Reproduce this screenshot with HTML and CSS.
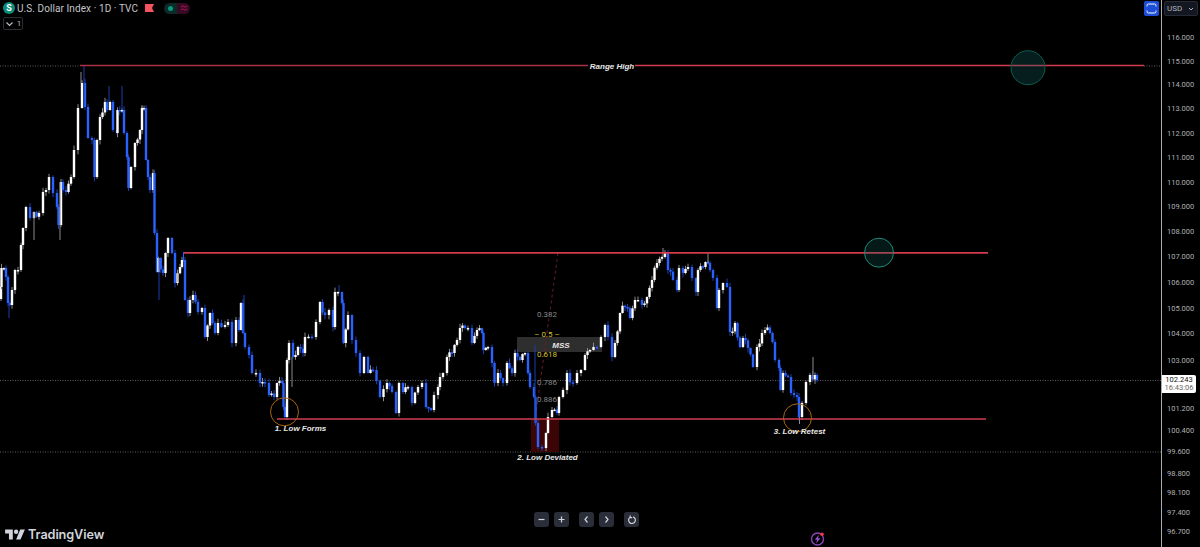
FILE: index.html
```html
<!DOCTYPE html>
<html>
  <head>
    <title>U.S. Dollar Index chart</title>

    <link rel="stylesheet" href="styles.css">
  </head>
  <body>
    <div class="chart-page">
      <div class="chart">
        <svg class="chart-canvas" width="1161" height="547">
          <!-- under the candles -->
          <line class="dots" x1="0" y1="66" x2="80" y2="66"></line>
          <line class="dots" x1="1144" y1="66" x2="1161" y2="66"></line>
          <line class="dots" x1="0" y1="380.5" x2="1161" y2="380.5"></line>
          <line class="dots" x1="0" y1="452" x2="1161" y2="452"></line>
          <rect class="deviation-box" x="531" y="419" width="28" height="33"></rect>
          <rect class="mss-box" x="517" y="337" width="85" height="15"></rect>
          <line class="fib-line" x1="558" y1="253" x2="535" y2="420"></line>

          <g class="js-candles"></g>

          <!-- drawings on top -->
          <line class="level-dim" x1="80" y1="65.5" x2="588" y2="65.5"></line>
          <line class="level" x1="635" y1="65.5" x2="1144" y2="65.5"></line>
          <line class="level" x1="183" y1="252.8" x2="988" y2="252.8"></line>
          <line class="level-start" x1="183.5" y1="252" x2="183.5" y2="262"></line>
          <line class="level" x1="277" y1="419" x2="986" y2="419"></line>

          <circle class="target-big" cx="1028" cy="67.7" r="17"></circle>
          <circle class="target-small" cx="879" cy="252.7" r="14.5"></circle>
          <circle class="low-ring" cx="284.5" cy="411.8" r="14"></circle>
          <circle class="low-ring" cx="797.5" cy="417.8" r="14"></circle>

          <text class="note" x="612" y="68.5" text-anchor="middle">Range High</text>
          <text class="note" x="300.5" y="430.5" text-anchor="middle">1. Low Forms</text>
          <text class="note" x="547.5" y="459.5" text-anchor="middle">2. Low Deviated</text>
          <text class="note" x="799.5" y="433.5" text-anchor="middle">3. Low Retest</text>
          <text class="note" x="561" y="347.5" text-anchor="middle">MSS</text>

          <text class="fib-label" x="547" y="317">0.382</text>
          <text class="fib-label fib-gold" x="547" y="337">– 0.5 –</text>
          <text class="fib-label fib-gold" x="547" y="357">0.618</text>
          <text class="fib-label" x="547" y="385">0.786</text>
          <text class="fib-label" x="547" y="402">0.886</text>
        </svg>

        <div class="legend">
          <span class="symbol-icon">S</span>
          <span class="legend-title">U.S. Dollar Index · 1D · TVC</span>
          <svg class="legend-flag" width="9" height="8" viewBox="0 0 9 8">
            <path d="M0 0H9L7 4L9 8H0Z"></path>
          </svg>
          <div class="status-pill">
            <span class="status-open"><span class="status-dot"></span></span>
            <span class="status-data">
              <svg width="8" height="6" viewBox="0 0 8 6">
                <path d="M1 2C2.5 .8 3.5 .8 4 1.5S5.5 2.2 7 1M1 5C2.5 3.8 3.5 3.8 4 4.5S5.5 5.2 7 4"></path>
              </svg>
            </span>
          </div>
        </div>

        <button class="collapse-button">
          <svg width="9" height="6" viewBox="0 0 9 6">
            <path d="M1.5 1.5L4.5 4.5L7.5 1.5"></path>
          </svg>
          <span>1</span>
        </button>

        <button class="fullscreen-button">
          <svg width="11" height="11" viewBox="0 0 11 11">
            <path d="M1 3.5V2.5Q1 1 2.5 1H8.5Q10 1 10 2.5V3.5M1 7.5V8.5Q1 10 2.5 10H8.5Q10 10 10 8.5V7.5"></path>
          </svg>
        </button>

        <div class="logo">
          <svg width="20" height="11" viewBox="0 0 36 20">
            <path d="M14 19H7V8H0V1H14V19ZM28 19H20L27.5 1H36L28 19Z"></path>
            <circle cx="20" cy="5" r="4"></circle>
          </svg>
          <span>TradingView</span>
        </div>

        <div class="nav-buttons">
          <div class="nav-group">
            <button class="nav-button">
              <svg width="9" height="9" viewBox="0 0 9 9"><path d="M1.5 4.5H7.5"></path></svg>
            </button>
            <button class="nav-button">
              <svg width="9" height="9" viewBox="0 0 9 9"><path d="M1.5 4.5H7.5M4.5 1.5V7.5"></path></svg>
            </button>
          </div>
          <div class="nav-group">
            <button class="nav-button">
              <svg width="9" height="9" viewBox="0 0 9 9"><path d="M5.5 1.5L3 4.5L5.5 7.5"></path></svg>
            </button>
            <button class="nav-button">
              <svg width="9" height="9" viewBox="0 0 9 9"><path d="M3.5 1.5L6 4.5L3.5 7.5"></path></svg>
            </button>
          </div>
          <button class="nav-button">
            <svg width="10" height="10" viewBox="0 0 10 10"><path d="M3.2 2.2A3.4 3.4 0 1 0 6.2 1.9M3.2 .6V2.6H5.2"></path></svg>
          </button>
        </div>

        <svg class="bolt-badge" width="16" height="16" viewBox="0 0 16 16">
          <circle class="bolt-ring" cx="7.5" cy="8" r="6"></circle>
          <path class="bolt" d="M9 3.8L4.8 8.8H7.2L6 12.4L10.4 7.2H8Z"></path>
          <circle class="bolt-dot" cx="12" cy="3.2" r="1.8"></circle>
        </svg>
      </div>

      <div class="price-axis">
        <svg width="38" height="547">
          <text x="5" y="40">116.000</text>
          <text x="5" y="64">115.000</text>
          <text x="5" y="87">114.000</text>
          <text x="5" y="111">113.000</text>
          <text x="5" y="136">112.000</text>
          <text x="5" y="160">111.000</text>
          <text x="5" y="185">110.000</text>
          <text x="5" y="209">109.000</text>
          <text x="5" y="234">108.000</text>
          <text x="5" y="259">107.000</text>
          <text x="5" y="285">106.000</text>
          <text x="5" y="311">105.000</text>
          <text x="5" y="336">104.000</text>
          <text x="5" y="363">103.000</text>
          <text x="5" y="411">101.200</text>
          <text x="5" y="433">100.400</text>
          <text x="5" y="454">99.600</text>
          <text x="5" y="476">98.800</text>
          <text x="5" y="495">98.100</text>
          <text x="5" y="515">97.400</text>
          <text x="5" y="534">96.700</text>
        </svg>
        <div class="last-price">
          <span class="last-value">102.243</span>
          <span class="last-timer">16:43:06</span>
        </div>
        <div class="currency-button">
          <span>USD</span>
          <svg width="6" height="4" viewBox="0 0 6 4"><path d="M1 1L3 3L5 1"></path></svg>
        </div>
      </div>
    </div>

    <script src="script.js"></script>
  </body>
</html>
```

FILE: styles.css
```css
body {
  margin: 0;
  background-color: black;
  font-family: Roboto, sans-serif;
  overflow: hidden;
}

button {
  padding: 0;
  border: none;
  font-family: inherit;
}

.chart-page {
  display: flex;
  width: 1200px;
  height: 547px;
}

.chart {
  position: relative;
  flex: 1;
}

.chart-canvas {
  display: block;
}

.dots {
  stroke: #5c5e63;
  stroke-width: 1;
  stroke-dasharray: 1 1.5;
}

.deviation-box {
  fill: #3c0505;
}

.mss-box {
  fill: #2e2e2e;
}

.fib-line {
  stroke: #6e1b26;
  stroke-width: 1;
  stroke-dasharray: 3 3;
}

.level,
.level-dim {
  stroke: #d23c4e;
  stroke-width: 1.7;
}

.level-dim {
  stroke: #a93342;
}

.level-start {
  stroke: #2962ff;
  stroke-width: 1;
}

.target-big {
  fill: rgba(20, 100, 100, 0.3);
  stroke: #0e5c50;
  stroke-width: 1;
}

.target-small {
  fill: rgba(20, 100, 100, 0.25);
  stroke: #1d8a78;
  stroke-width: 1;
}

.low-ring {
  fill: none;
  stroke: #a8660f;
  stroke-width: 1;
}

.note {
  fill: #e6e6e6;
  font-family: "Liberation Sans", sans-serif;
  font-size: 8px;
  font-style: italic;
  font-weight: bold;
}

.fib-label {
  fill: #85878b;
  font-size: 8px;
  text-anchor: middle;
}

.fib-gold {
  fill: #d8c22a;
}

.legend {
  position: absolute;
  top: 2px;
  left: 3px;
  display: flex;
  align-items: center;
  height: 12px;
}

.symbol-icon {
  display: flex;
  justify-content: center;
  align-items: center;
  width: 12px;
  height: 12px;
  border-radius: 6px;
  background-color: #0b8c78;
  color: white;
  font-size: 9px;
  font-weight: bold;
}

.legend-title {
  margin-left: 2px;
  color: #c4c6cb;
  font-size: 10px;
  letter-spacing: 0.08px;
  white-space: nowrap;
}

.legend-flag {
  margin-left: 7px;
  fill: #f7525f;
}

.status-pill {
  display: flex;
  margin-left: 10px;
  height: 11px;
  border-radius: 6px;
  overflow: hidden;
}

.status-open,
.status-data {
  display: flex;
  justify-content: center;
  align-items: center;
  width: 13px;
}

.status-open {
  background-color: #0a2b27;
}

.status-data {
  background-color: #350a22;
}

.status-data path {
  fill: none;
  stroke: #c2185b;
  stroke-width: 1;
}

.status-dot {
  width: 5px;
  height: 5px;
  border-radius: 3px;
  background-color: #089981;
}

.collapse-button {
  position: absolute;
  top: 17px;
  left: 3px;
  display: flex;
  justify-content: center;
  align-items: center;
  gap: 3px;
  width: 20px;
  height: 13px;
  box-sizing: border-box;
  border: 1px solid #2a2d33;
  border-radius: 2px;
  background-color: transparent;
  color: #b8bac0;
  font-size: 8px;
}

.collapse-button path {
  fill: none;
  stroke: #b8bac0;
  stroke-width: 1.2;
}

.fullscreen-button {
  position: absolute;
  top: 1px;
  left: 1144px;
  display: flex;
  justify-content: center;
  align-items: center;
  width: 15px;
  height: 15px;
  border-radius: 2px;
  background-color: #1c4dd6;
}

.fullscreen-button path {
  fill: none;
  stroke: white;
  stroke-width: 1;
}

.logo {
  position: absolute;
  top: 527px;
  left: 5px;
  display: flex;
  align-items: center;
  gap: 3px;
  color: #d1d4dc;
  font-family: Inter, sans-serif;
  font-size: 12.7px;
  font-weight: 600;
  letter-spacing: -0.1px;
}

.logo svg {
  fill: #d1d4dc;
}

.nav-buttons {
  position: absolute;
  top: 512px;
  left: 534px;
  display: flex;
  gap: 10px;
}

.nav-group {
  display: flex;
  gap: 5px;
}

.nav-button {
  display: flex;
  justify-content: center;
  align-items: center;
  width: 15px;
  height: 15px;
  border-radius: 3px;
  background-color: #2a2e39;
}

.nav-button path {
  fill: none;
  stroke: #d1d4dc;
  stroke-width: 1.2;
}

.bolt-badge {
  position: absolute;
  top: 531px;
  left: 810px;
}

.bolt-ring {
  fill: none;
  stroke: #8a44b8;
  stroke-width: 1.4;
}

.bolt {
  fill: #a04fd4;
}

.bolt-dot {
  fill: #f23645;
}

.price-axis {
  position: relative;
  box-sizing: border-box;
  width: 39px;
  border-left: 1px solid #a9abb0;
}

.price-axis text {
  fill: #aeb0b5;
  font-size: 7.5px;
}

.last-price {
  position: absolute;
  top: 375px;
  left: 0;
  display: flex;
  flex-direction: column;
  align-items: center;
  justify-content: center;
  width: 34px;
  height: 18px;
  border-radius: 0 2px 2px 0;
  background-color: white;
  font-size: 7.5px;
  line-height: 8.5px;
}

.last-value {
  color: #111;
}

.last-timer {
  color: #666;
}

.currency-button {
  position: absolute;
  top: 1px;
  left: 2px;
  display: flex;
  justify-content: space-between;
  align-items: center;
  box-sizing: border-box;
  width: 34px;
  height: 15px;
  padding: 0 3px 0 2px;
  border: 1px solid #272b36;
  border-radius: 2px;
  background-color: #131722;
  color: #b2b5be;
  font-size: 8px;
}

.currency-button path {
  fill: none;
  stroke: #b2b5be;
  stroke-width: 1;
}
```

FILE: script.js
```js
// closes traced off the chart as x,y pixel pairs
const traced = [
  [1,287],[1.5,268],[4,268],[6,277],[8,303],[10,305],[12,290],[15,270],[18,270],[21,245],
  [23,228],[26,207],[30,218],[34,212],[39,213],[43,192],[46,190],[49,177],[53,193],[57,207],
  [58.5,225],[61,182],[63,190],[66,192],[71,177],[74,150],[78,108],[82,83],[85,107],[88,138],
  [92,140],[94.5,177],[97,140],[100,117],[105,102],[107,110],[110,102],[113,130],[117,133],[117.5,110],
  [122,110],[124,133],[127,157],[128.5,188],[131,167],[135,143],[140,130],[142,108],[144,108],[146,160],
  [148,177],[150,190],[153,173],[154.5,233],[157,272],[158.5,258],[163,273],[168,238],[172,253],[175,283],
  [180,267],[182,260],[185,300],[188,313],[190,300],[193,295],[198,312],[202,308],[205,337],[210,313],
  [215,333],[218,323],[225,325],[228,322],[232,343],[236,320],[239,330],[241,303],[243,333],[245,347],
  [249,355],[252,373],[256,373],[260,383],[265,383],[269,395],[274,397],[277,383],[282,383],[283.5,407],
  [285,417],[287,360],[289,343],[293,357],[298,347],[303,353],[305,337],[312,337],[316,322],[320,302],
  [325,315],[329,310],[333,327],[335,292],[338,292],[342,303],[343.5,343],[348,315],[352,340],[356,353],
  [360,373],[364,357],[368,373],[373,370],[380,397],[387,383],[392,392],[396,413],[399,383],[403,392],
  [408,387],[412,403],[418,387],[422,383],[426,407],[431,410],[434,395],[438,387],[440,377],[443,373],
  [447,357],[452,353],[457,340],[460,328],[465,328],[468,328],[472,343],[477,330],[482,333],[483.5,350],
  [488,347],[492,363],[494.5,383],[498,373],[503,383],[507,363],[512,373],[515,353],[520,360],[525,353],
  [528,373],[530,387],[534,397],[535.5,423],[538,447],[542,448],[546,433],[548,417],[552,410],[557,413],
  [559,397],[563,390],[567,373],[573,383],[577,373],[581,370],[585,355],[590,350],[597,347],[601,337],
  [605,325],[608,337],[612,357],[615,343],[620,313],[625,307],[630,318],[635,300],[638,300],[642,305],
  [647,297],[652,280],[657,263],[662,257],[665,253],[668,270],[673,280],[677,290],[679,268],[683,273],
  [688,267],[692,278],[696,292],[698,270],[703,267],[708,263],[710,270],[713,278],[717,308],[719,290],
  [723,283],[727,287],[730,332],[735,323],[740,347],[743,338],[748,348],[753,367],[757,347],[762,333],
  [765,330],[770,333],[775,360],[779,368],[780.5,390],[783,373],[788,377],[791,393],[797,397],[799,417],
  [802,403],[806,382],[810,375],[815,375],[817,380]
];

// the long wicks that stand out
const tallWicks = [
  [84,66,'blue'],[81,72,'white'],[109,86,'blue'],[122,86,'blue'],[142,105,'white'],[339,285,'blue'],
  [663,248,'white'],[708,253,'white'],[813,357,'white'],[799.5,424,'white'],[535,345,'blue'],[159,300,'blue'],
  [9,318,'blue'],[60,240,'white'],[34,240,'white'],[178,282,'white'],[244,295,'blue'],[292,387,'white']
];

const svgNS = 'http://www.w3.org/2000/svg';
const candleGroup = document.querySelector('.js-candles');

function wiggle (i) {
  return Math.abs(Math.sin(i * 12.9898) * 43758.5453) % 1;
}

// wide gaps in the trace get one extra candle so the bars sit as close as on the chart
function fillGaps (points) {
  const filled = [];
  points.forEach((point, i) => {
    const previous = points[i - 1];
    if (previous && point[0] - previous[0] > 4.4) {
      const middle = (previous[1] + point[1]) / 2;
      filled.push([(previous[0] + point[0]) / 2, middle + (wiggle(i + 900) - 0.5) * 9]);
    }
    filled.push(point);
  });
  return filled;
}

function addRect (x, y, width, height, fill) {
  const rect = document.createElementNS(svgNS, 'rect');
  rect.setAttribute('x', x);
  rect.setAttribute('y', y);
  rect.setAttribute('width', width);
  rect.setAttribute('height', height);
  rect.setAttribute('fill', fill);
  candleGroup.appendChild(rect);
}

function drawCandle (x, open, close, i) {
  const isUp = close <= open;
  const top = Math.min(open, close);
  const bottom = Math.max(open, close);
  const wickUp = 0.5 + wiggle(i) * 4;
  const wickDown = 0.5 + wiggle(i + 500) * 4;

  addRect(x - 0.5, top - wickUp, 1, bottom - top + wickUp + wickDown, isUp ? '#8a8a8a' : '#1c3fb0');
  addRect(x - 1.2, top, 2.4, Math.max(bottom - top, 1.5), isUp ? '#ffffff' : '#2962ff');
}

const closes = fillGaps(traced);

closes.forEach((point, i) => {
  if (i === 0) {
    drawCandle(point[0], point[1] + 12, point[1], i);
    return;
  }
  drawCandle(point[0], closes[i - 1][1], point[1], i);
});

tallWicks.forEach((wick) => {
  const color = wick[2] === 'blue' ? '#1c3fb0' : '#8a8a8a';
  let nearest = closes[0];
  closes.forEach((point) => {
    if (Math.abs(point[0] - wick[0]) < Math.abs(nearest[0] - wick[0])) {
      nearest = point;
    }
  });
  addRect(wick[0] - 0.5, Math.min(wick[1], nearest[1]), 1, Math.abs(wick[1] - nearest[1]), color);
});
```
